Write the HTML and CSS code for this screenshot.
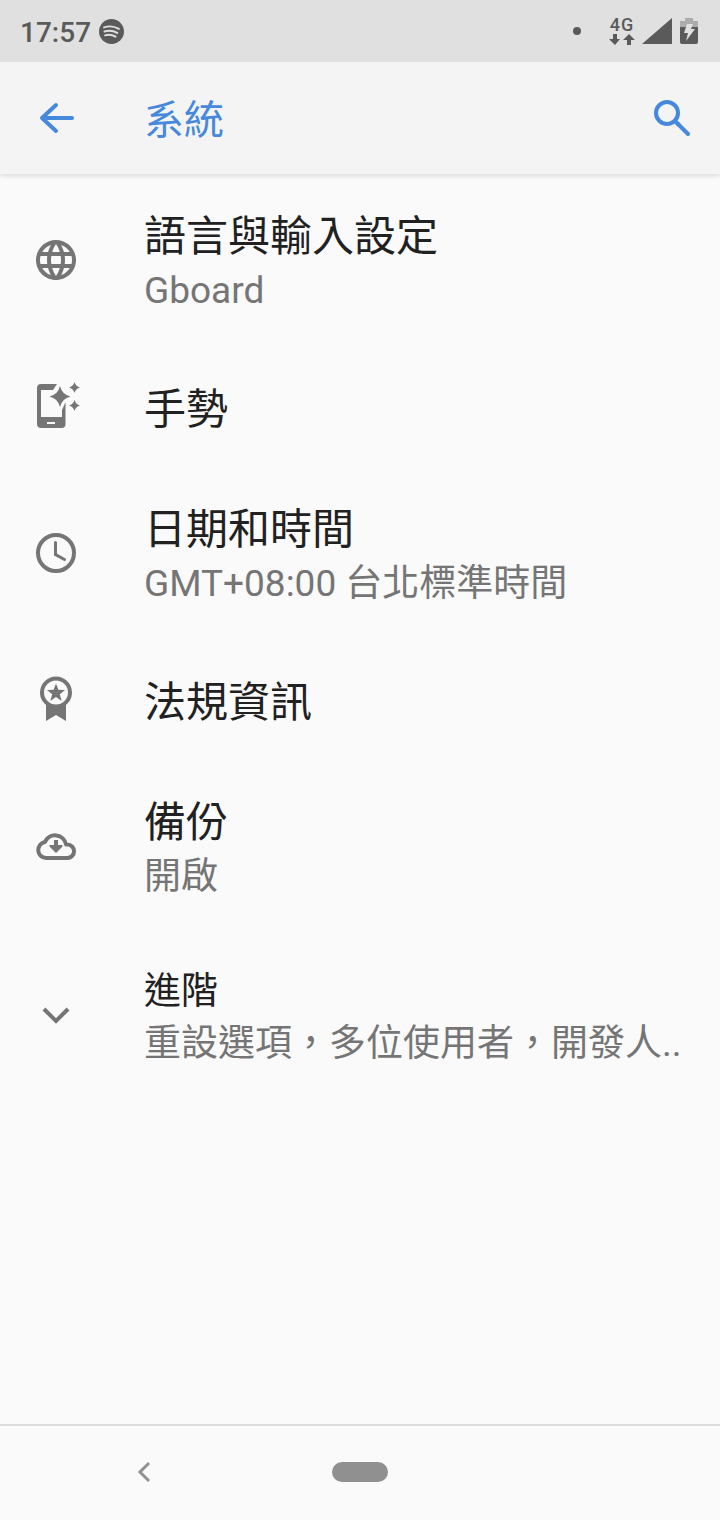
FILE: index.html
```html
<!DOCTYPE html>
<html lang="zh-Hant">
<head>
  <meta charset="UTF-8" />
  <meta name="viewport" content="width=device-width, initial-scale=1.0" />
  <title>系統</title>
  <link rel="stylesheet" href="styles.css">
</head>
<body>
  <div class="status-bar">
    <span class="clock">17:57</span>
    <svg class="spotify" viewBox="0 0 24 24">
      <circle cx="12" cy="12" r="12" fill="#5a5a5a" />
      <path d="M4.8 8c4.800-1.500 10.200-.9 14.300 1.400M5.300 12c4.200-1.200 8.500-.7 12.200 1.400M5.800 15.700c3.600-.9 7.100-.5 10.100 1.200" fill="none" stroke="#e0e0e0" stroke-width="1.9" stroke-linecap="round" />
    </svg>
    <div class="status-icons">
      <span class="dot"></span>
      <div class="network">
        <span class="network-type">4G</span>
        <svg class="arrows" viewBox="0 0 26 11">
          <path d="M4 0h4v5h3L6 11 0 5h4zM18 11h4V6h4L20 0l-6 6h4z" fill="#5a5a5a" />
        </svg>
      </div>
      <svg class="signal" viewBox="0 0 30 26"><path d="M30 0v26H0z" fill="#5a5a5a" /></svg>
      <svg class="battery" viewBox="0 0 18 26">
        <path d="M5 0h8v3h5v7H0V3h5z" fill="#acacac" />
        <path d="M0 9h18v15q0 2-2 2H2q-2 0-2-2z" fill="#5a5a5a" />
        <path d="M7 6h6l-2 5h4L6 23l2-8H4z" fill="#e0e0e0" />
      </svg>
    </div>
  </div>

  <header class="app-bar">
    <button class="icon-button" aria-label="返回">
      <svg viewBox="0 0 48 48"><path d="M40 24H10M24 11L10 24l14 13" fill="none" stroke="#4688dc" stroke-width="4" stroke-linecap="round" stroke-linejoin="round" /></svg>
    </button>
    <h1>系統</h1>
    <button class="icon-button" aria-label="搜尋">
      <svg viewBox="0 0 48 48"><g fill="none" stroke="#4688dc" stroke-width="4"><circle cx="19" cy="19" r="11" /><path d="M30 30l10 10" stroke-linecap="round" /><path d="M27 27l4 4" /></g></svg>
    </button>
  </header>

  <main class="settings">
    <a class="item" href="#language">
      <svg class="icon" viewBox="0 0 24 24"><path d="M11.99 2C6.47 2 2 6.48 2 12s4.47 10 9.99 10C17.52 22 22 17.52 22 12S17.52 2 11.99 2zm6.93 6h-2.95c-.32-1.25-.78-2.45-1.38-3.56 1.84.63 3.37 1.91 4.33 3.56zM12 4.04c.83 1.2 1.48 2.53 1.91 3.96h-3.82c.43-1.43 1.08-2.76 1.91-3.96zM4.26 14C4.1 13.36 4 12.69 4 12s.1-1.36.26-2h3.38c-.08.66-.14 1.32-.14 2s.06 1.34.14 2H4.26zm.82 2h2.95c.32 1.25.78 2.45 1.38 3.56-1.84-.63-3.37-1.9-4.33-3.56zm2.95-8H5.08c.96-1.66 2.49-2.93 4.33-3.56C8.81 5.55 8.35 6.75 8.03 8zM12 19.96c-.83-1.2-1.48-2.53-1.91-3.96h3.82c-.43 1.43-1.08 2.76-1.91 3.96zM14.34 14H9.66c-.09-.66-.16-1.32-.16-2s.07-1.35.16-2h4.68c.09.65.16 1.32.16 2s-.07 1.34-.16 2zm.25 5.56c.6-1.11 1.06-2.31 1.38-3.56h2.95c-.96 1.65-2.49 2.93-4.33 3.56zM16.36 14c.08-.66.14-1.32.14-2s-.06-1.34-.14-2h3.38c.16.64.26 1.31.26 2s-.1 1.36-.26 2h-3.38z" /></svg>
      <div class="text">
        <div class="title">語言與輸入設定</div>
        <div class="summary">Gboard</div>
      </div>
    </a>

    <a class="item single" href="#gestures">
      <svg class="icon" viewBox="0 0 48 48">
        <path fill-rule="evenodd" d="M9 1h16l-4 6H9v27h21v-7l3.500-8V41q0 4-4 4h-20q-4.500 0-4.500-4V5q0-4 4-4zM15 39v2h8v-2z" />
        <path d="M28 3q2 8.500 10.500 10.500-8.500 2-10.500 10.500-2-8.500-10.500-10.500 8.500-2 10.500-10.500zM42.500-1q1.200 4.300 5.500 5.500-4.300 1.200-5.500 5.500-1.200-4.300-5.500-5.500 4.300-1.200 5.500-5.500zM42.500 17q1.200 4.300 5.500 5.500-4.300 1.200-5.500 5.500-1.200-4.300-5.500-5.500 4.300-1.200 5.500-5.500z" />
      </svg>
      <div class="text">
        <div class="title">手勢</div>
      </div>
    </a>

    <a class="item" href="#date">
      <svg class="icon" viewBox="0 0 48 48"><g fill="none" stroke="#757575"><circle cx="24" cy="24" r="18" stroke-width="4" /><path d="M23.500 13.500v12l9 5" stroke-width="3" stroke-linecap="round" /></g></svg>
      <div class="text">
        <div class="title">日期和時間</div>
        <div class="summary">GMT+08:00 台北標準時間</div>
      </div>
    </a>

    <a class="item single" href="#regulatory">
      <svg class="icon" viewBox="0 0 48 48">
        <circle cx="24" cy="16.500" r="14" fill="none" stroke="#757575" stroke-width="4" />
        <path d="M14 27q10 7 20 0v18l-10-6-10 6zM24 7.500l2.400 6.200 6.600.3-5.200 4.200 1.900 6.800-5.700-3.900-5.700 3.900 1.900-6.800-5.200-4.200 6.600-.3z" />
      </svg>
      <div class="text">
        <div class="title">法規資訊</div>
      </div>
    </a>

    <a class="item" href="#backup">
      <svg class="icon" viewBox="0 0 48 48">
        <path d="M14 36a8 8 0 0 1-1-15.900A11 11 0 0 1 34 22.500H35.300a6.750 6.750 0 0 1 0 13.500z" fill="none" stroke="#757575" stroke-width="4" stroke-linejoin="round" />
        <path d="M22 18h4v5h4.500v1.500L24 31l-6.500-6.500V23H22z" />
      </svg>
      <div class="text">
        <div class="title">備份</div>
        <div class="summary">開啟</div>
      </div>
    </a>

    <button class="item advanced">
      <svg class="icon" viewBox="0 0 48 48"><path d="M12 18l12 12 12-12" fill="none" stroke="#757575" stroke-width="4" /></svg>
      <div class="text">
        <div class="title">進階</div>
        <div class="summary">重設選項，多位使用者，開發人..</div>
      </div>
    </button>
  </main>

  <nav class="nav-bar">
    <button class="nav-back" aria-label="返回">
      <svg viewBox="0 0 24 24"><path d="M17 3l-9 9 9 9" fill="none" stroke="#909090" stroke-width="3" /></svg>
    </button>
    <button class="nav-home" aria-label="主畫面"></button>
  </nav>
</body>
</html>
```
FILE: styles.css
```css
* {
  box-sizing: border-box;
}

body {
  margin: 0;
  min-height: 100vh;
  display: flex;
  flex-direction: column;
  font-family: Roboto, "Noto Sans CJK TC", sans-serif;
  background: #fafafa;
  color: #212121;
}

button {
  padding: 0;
  border: none;
  background: none;
  font: inherit;
  color: inherit;
  cursor: pointer;
}

svg {
  display: block;
  flex: none;
  overflow: visible;
}

.status-bar {
  display: flex;
  align-items: center;
  height: 62px;
  padding: 0 22px 0 20px;
  background: #e0e0e0;
  color: #5a5a5a;
}

.clock {
  padding-top: 4px;
  font-size: 28px;
  font-weight: 500;
  line-height: 32px;
}

.spotify {
  width: 25px;
  height: 25px;
  margin-left: 8px;
}

.status-icons {
  display: flex;
  align-items: center;
  margin-left: auto;
}

.dot {
  width: 8px;
  height: 8px;
  margin-right: 28px;
  border-radius: 50%;
  background: #5a5a5a;
}

.network {
  display: flex;
  flex-direction: column;
  align-items: center;
  padding-bottom: 2px;
  margin-right: 7px;
}

.network-type {
  font-size: 18px;
  font-weight: 500;
  line-height: 18px;
  letter-spacing: 1px;
}

.arrows {
  width: 26px;
  height: 11px;
}

.signal {
  width: 30px;
  height: 26px;
  margin-right: 8px;
}

.battery {
  width: 18px;
  height: 26px;
}

.app-bar {
  display: flex;
  align-items: center;
  height: 112px;
  padding: 0 24px 0 32px;
  background: #f4f4f4;
  box-shadow: 0 2px 5px rgba(0, 0, 0, 0.13);
  clip-path: inset(0 0 -10px 0);
}

.app-bar h1 {
  flex: 1;
  margin: 0 0 0 64px;
  padding-top: 6px;
  font-size: 40px;
  font-weight: 400;
  line-height: 56px;
  color: #4688dc;
}

.icon-button,
.icon-button svg {
  width: 48px;
  height: 48px;
}

.settings {
  flex: 1;
  padding-top: 12px;
}

.item {
  display: flex;
  align-items: center;
  width: 100%;
  height: 148px;
  padding: 0 32px;
  text-align: left;
  text-decoration: none;
  color: #212121;
}

.item.single {
  height: 145px;
}

.item.advanced {
  height: 190px;
}

.icon {
  width: 48px;
  height: 48px;
  fill: #757575;
}

.text {
  flex: 1;
  min-width: 0;
  margin-left: 64px;
  padding-top: 6px;
}

.title {
  font-size: 42px;
  line-height: 56px;
}

.summary {
  font-size: 37px;
  line-height: 52px;
  color: #757575;
  white-space: nowrap;
  overflow: hidden;
}

.advanced .title {
  font-size: 37px;
  line-height: 52px;
}

.nav-bar {
  display: grid;
  grid-template-columns: 2fr 1fr 2fr;
  align-items: center;
  justify-items: center;
  height: 96px;
  padding-bottom: 2px;
  border-top: 2px solid #dcdcdc;
}

.nav-back svg {
  width: 24px;
  height: 24px;
}

.nav-home {
  width: 56px;
  height: 20px;
  border-radius: 10px;
  background: #909090;
}
```
